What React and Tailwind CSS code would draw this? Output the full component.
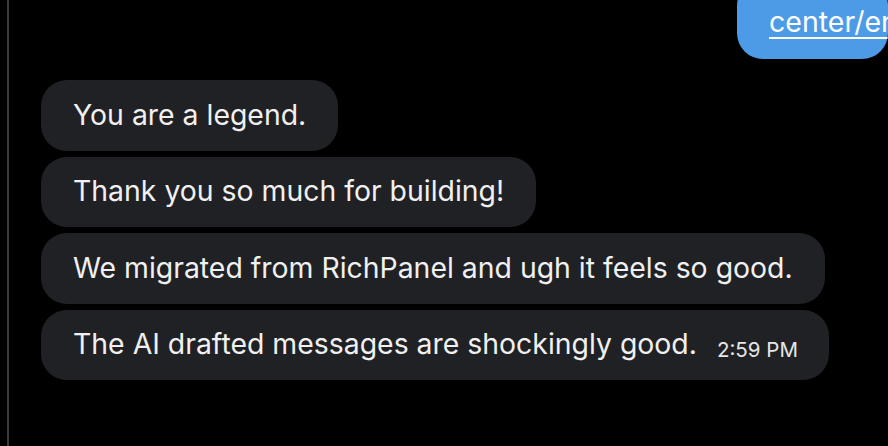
export default function App() {
  const msgs = [
    "You are a legend.",
    "Thank you so much for building!",
    "We migrated from RichPanel and ugh it feels so good.",
  ];
  return (
    <div className="w-[888px] h-[446px] bg-black overflow-hidden flex" style={{ fontFamily: "Inter, 'Noto Sans', sans-serif" }}>
      <div className="w-[7px] shrink-0" />
      <div className="w-[2px] shrink-0 bg-[#3b3b3b]" />
      <div className="flex-1 flex flex-col relative">
        <div className="flex justify-end h-[80px] items-start">
          <div className="mt-[-20px] bg-[#4d9be6] rounded-[26px] pl-[32px] pr-0 pt-[24px] pb-[19px] w-[151px] overflow-hidden">
            <div className="text-white text-[28.5px] leading-[36px] underline underline-offset-[5px] decoration-2 whitespace-nowrap">center/en</div>
          </div>
        </div>
        <div className="flex flex-col items-start gap-[6px] pl-[32px]">
          {msgs.map((m) => (
            <div key={m} className="bg-[#202124] rounded-[26px] h-[70.5px] px-[32px] flex items-center text-[#f0f0f0] text-[28.4px] whitespace-nowrap">
              {m}
            </div>
          ))}
          <div className="bg-[#202124] rounded-[26px] h-[70.5px] pl-[32px] pr-[31px] flex items-center text-[#f0f0f0] whitespace-nowrap">
            <span className="text-[28.4px]">The AI drafted messages are shockingly good.</span>
            <span className="text-[20.5px] ml-[20px] mt-[12px] text-[#e6e6e6]">2:59 PM</span>
          </div>
        </div>
      </div>
    </div>
  );
}
